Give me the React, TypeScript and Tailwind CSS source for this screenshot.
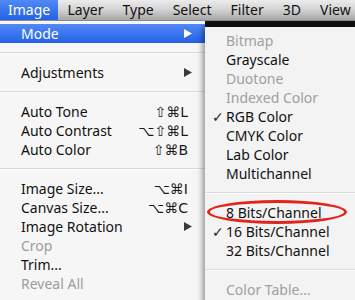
import React from "react";

const font = { fontFamily: '"Noto Sans", "DejaVu Sans", sans-serif' };

function Arrow({ white }: { white?: boolean }) {
  return (
    <svg width="8" height="9" viewBox="0 0 8 9" className="shrink-0">
      <path d="M0 0 L8 4.5 L0 9 Z" fill={white ? "#ffffff" : "#3a3a3a"} />
    </svg>
  );
}

function Sep() {
  return (
    <div className="h-[20px] flex flex-col justify-center">
      <div className="w-full h-px bg-[#d9d9d9]" />
      <div className="w-full h-px bg-[#fbfbfb]" />
    </div>
  );
}

type Item = { label: string; shortcut?: string; arrow?: boolean; disabled?: boolean; active?: boolean };

function MainRow({ label, shortcut, arrow, disabled, active }: Item) {
  return (
    <div
      className={
        "h-[19px] flex items-center pl-[21px] " +
        (arrow ? "pr-[13px] " : "pr-[17px] ") +
        (active ? "bg-gradient-to-b from-[#5289f6] to-[#2360e6] text-white " : disabled ? "text-[#9c9c9c] " : "text-[#111] ")
      }
    >
      <span className="flex-1 whitespace-nowrap">{label}</span>
      {shortcut && (
        <span className="whitespace-nowrap text-[14px] text-[#1a1a1a]" style={{ fontFamily: '"DejaVu Sans", sans-serif' }}>
          {shortcut}
        </span>
      )}
      {arrow && <Arrow white={active} />}
    </div>
  );
}

function SubRow({ label, checked, disabled }: { label: string; checked?: boolean; disabled?: boolean }) {
  return (
    <div className={"h-[19px] flex items-center pl-[7px] " + (disabled ? "text-[#a0a0a0]" : "text-[#111]")}>
      <span className="w-[14px] text-[14px] text-[#2a2a2a]" style={{ fontFamily: '"DejaVu Sans", sans-serif' }}>
        {checked ? "✓" : ""}
      </span>
      <span className="whitespace-nowrap">{label}</span>
    </div>
  );
}

export default function App() {
  const bar = ["Layer", "Type", "Select", "Filter", "3D", "View"];
  return (
    <div className="w-[355px] h-[300px] overflow-hidden bg-[#111] text-[14px] leading-none" style={font}>
      <div className="h-[21px] flex items-stretch bg-gradient-to-b from-[#ececec] via-[#d2d2d2] to-[#a6a6a6] border-b border-[#8a8a8a]">
        <div className="px-[8px] w-[58px] flex items-center bg-gradient-to-b from-[#5289f6] to-[#2360e6] text-white">Image</div>
        {bar.map((b) => (
          <div key={b} className="px-[9.5px] flex items-center text-[#111] whitespace-nowrap">
            {b}
          </div>
        ))}
      </div>
      <div className="flex items-start">
        <div className="w-[205px] shrink-0 bg-[#f6f6f6] pt-[3px] h-[279px]">
          <MainRow label="Mode" arrow active />
          <Sep />
          <MainRow label="Adjustments" arrow />
          <Sep />
          <MainRow label="Auto Tone" shortcut="⇧⌘L" />
          <MainRow label="Auto Contrast" shortcut="⌥⇧⌘L" />
          <MainRow label="Auto Color" shortcut="⇧⌘B" />
          <Sep />
          <MainRow label="Image Size..." shortcut="⌥⌘I" />
          <MainRow label="Canvas Size..." shortcut="⌥⌘C" />
          <MainRow label="Image Rotation" arrow />
          <MainRow label="Crop" disabled />
          <MainRow label="Trim..." />
          <MainRow label="Reveal All" disabled />
        </div>
        <div className="flex-1 mt-[6px] relative z-10 bg-[#f3f3f3] pt-[4px] pb-[10px] shadow-[-3px_0_5px_rgba(0,0,0,0.35)]">
          <SubRow label="Bitmap" disabled />
          <SubRow label="Grayscale" />
          <SubRow label="Duotone" disabled />
          <SubRow label="Indexed Color" disabled />
          <SubRow label="RGB Color" checked />
          <SubRow label="CMYK Color" />
          <SubRow label="Lab Color" />
          <SubRow label="Multichannel" />
          <Sep />
          <div className="relative">
            <SubRow label="8 Bits/Channel" />
            <div className="absolute left-[2px] top-[-3px] w-[140px] h-[24px] rounded-[50%] border-[3px] border-[#e0261c]" />
          </div>
          <SubRow label="16 Bits/Channel" checked />
          <SubRow label="32 Bits/Channel" />
          <Sep />
          <SubRow label="Color Table..." disabled />
        </div>
      </div>
    </div>
  );
}
